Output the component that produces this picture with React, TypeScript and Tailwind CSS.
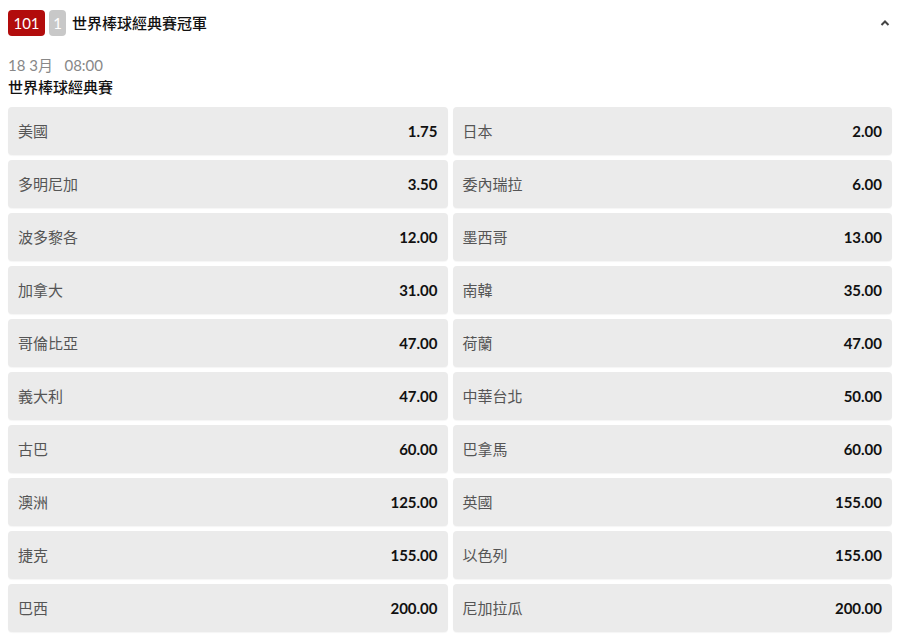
import React from 'react';

const odds: [string, string][] = [
  ['美國', '1.75'],
  ['日本', '2.00'],
  ['多明尼加', '3.50'],
  ['委內瑞拉', '6.00'],
  ['波多黎各', '12.00'],
  ['墨西哥', '13.00'],
  ['加拿大', '31.00'],
  ['南韓', '35.00'],
  ['哥倫比亞', '47.00'],
  ['荷蘭', '47.00'],
  ['義大利', '47.00'],
  ['中華台北', '50.00'],
  ['古巴', '60.00'],
  ['巴拿馬', '60.00'],
  ['澳洲', '125.00'],
  ['英國', '155.00'],
  ['捷克', '155.00'],
  ['以色列', '155.00'],
  ['巴西', '200.00'],
  ['尼加拉瓜', '200.00'],
];

export default function App() {
  return (
    <div className="min-h-screen bg-white font-['Lato','Noto_Sans_CJK_TC',sans-serif] text-[#111]">
      <header className="flex items-center justify-between h-[46px] pl-2 pr-[10px]">
        <div className="flex items-center">
          <span className="flex items-center justify-center h-[26px] w-[37px] rounded-[4px] bg-[#b20c0c] text-white text-[15px]">
            101
          </span>
          <span className="ml-1 flex items-center justify-center h-[26px] w-[17px] rounded-[4px] bg-[#c8c8c8] text-white text-[15px]">
            1
          </span>
          <h1 className="ml-[6px] text-[15px] font-medium">世界棒球經典賽冠軍</h1>
        </div>
        <svg width="10" height="8" viewBox="0 0 10 8" className="text-[#444]">
          <path d="M1.5 6 L5 2.5 L8.5 6" fill="none" stroke="currentColor" strokeWidth="2" />
        </svg>
      </header>

      <div className="px-2 pt-[9px]">
        <div className="text-[15px] text-[#888] leading-[20px]">
          18 3月&nbsp;&nbsp; 08:00
        </div>
        <div className="text-[15px] font-medium leading-[22px] mt-[1px]">世界棒球經典賽</div>

        <div className="mt-[9px] grid grid-cols-2 gap-x-[5px] gap-y-[5px]">
          {odds.map(([name, price]) => (
            <button
              key={name}
              className="flex items-center justify-between h-[48px] px-[10px] rounded-[4px] bg-[#ebebeb] shadow-[0_1px_1px_rgba(0,0,0,0.04)]"
            >
              <span className="text-[15px] text-[#555]">{name}</span>
              <span className="text-[15px] font-bold text-[#111]">{price}</span>
            </button>
          ))}
        </div>
      </div>
    </div>
  );
}
